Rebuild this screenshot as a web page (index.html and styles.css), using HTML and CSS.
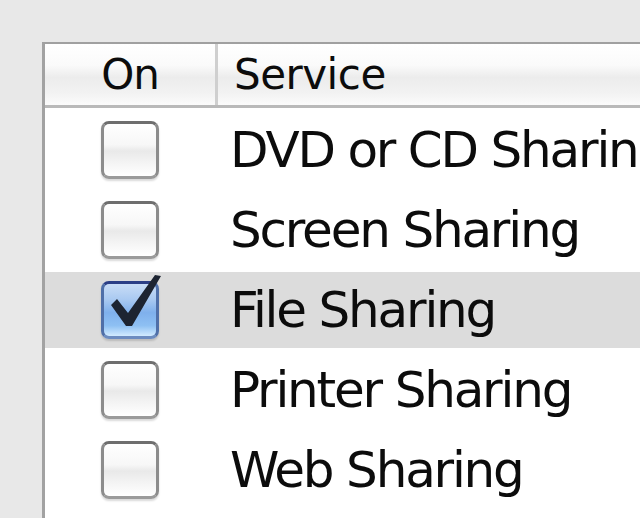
FILE: index.html
```html
<!DOCTYPE html>
<html lang="en">
<head>
  <meta charset="UTF-8" />
  <meta name="viewport" content="width=device-width, initial-scale=1.0"/>
  <title>Sharing Services</title>
  <link rel="stylesheet" href="styles.css">
</head>
<body>

  <div class="table">
    <!-- header -->
    <div class="table-head">
      <div class="col-on">On</div>
      <div class="col-service">Service</div>
    </div>

    <!-- rows -->
    <div class="table-body">
      <div class="row">
        <div class="cell-on"><span class="check"></span></div>
        <div class="cell-name">DVD or CD Sharing</div>
      </div>
      <div class="row">
        <div class="cell-on"><span class="check"></span></div>
        <div class="cell-name">Screen Sharing</div>
      </div>
      <div class="row selected">
        <div class="cell-on">
          <span class="check checked">
            <svg class="tick" width="58" height="58" viewBox="0 0 58 58">
              <path d="M10 24 L16 18 L27 32 L54 -6 L60 -5 L31 45 L25 45 Z" fill="#1d2431"/>
            </svg>
          </span>
        </div>
        <div class="cell-name">File Sharing</div>
      </div>
      <div class="row">
        <div class="cell-on"><span class="check"></span></div>
        <div class="cell-name">Printer Sharing</div>
      </div>
      <div class="row">
        <div class="cell-on"><span class="check"></span></div>
        <div class="cell-name">Web Sharing</div>
      </div>
    </div>
  </div>

</body>
</html>
```

FILE: styles.css
```css
html, body {
  margin: 0;
  height: 518px;
  overflow: hidden;
}
body {
  font-family: "DejaVu Sans", Verdana, sans-serif;
  background-color: #e8e8e8;
  color: #0c0c0c;
  padding: 42px 0 0 42px;
  box-sizing: border-box;
}
.table {
  width: 700px;
  height: 520px;
  background-color: #fff;
  border-left: 3px solid #a2a2a2;
  border-top: 2px solid #a0a0a0;
}
.table-head {
  display: flex;
  height: 61px;
  border-bottom: 3px solid #b9b9b9;
  background: linear-gradient(#ffffff 0%, #fafafa 35%, #ececec 55%, #f2f2f2 80%, #fbfbfb 100%);
}
.col-on {
  width: 170px;
  display: flex;
  align-items: center;
  justify-content: center;
  font-size: 42px;
  letter-spacing: -1px;
  border-right: 3px solid #cfcfcf;
}
.col-service {
  display: flex;
  align-items: center;
  padding-left: 16px;
  font-size: 42px;
  letter-spacing: -0.5px;
}
.table-body {
  display: flex;
  flex-direction: column;
  gap: 4px;
  padding-top: 4px;
}
.row {
  display: flex;
  height: 76px;
}
.row.selected {
  background-color: #dcdcdc;
}
.cell-on {
  width: 173px;
  display: flex;
  align-items: center;
  justify-content: center;
  padding-right: 3px;
  box-sizing: border-box;
}
.cell-name {
  display: flex;
  align-items: center;
  padding-left: 12px;
  font-size: 50px;
  letter-spacing: -2.2px;
  white-space: nowrap;
}
.check {
  position: relative;
  width: 52px;
  height: 52px;
  border: 3px solid #8c8c8c;
  border-top-color: #6e6e6e;
  border-bottom-color: #9a9a9a;
  border-radius: 8px;
  background: linear-gradient(#ffffff 0%, #f7f7f7 40%, #e9e9e9 52%, #f4f4f4 75%, #ffffff 100%);
  box-shadow: 0 2px 2px rgba(0, 0, 0, 0.15);
}
.check.checked {
  border-color: #4f6fa8;
  border-top-color: #2c3f86;
  border-bottom-color: #6c8cc0;
  background: linear-gradient(#c9ddf6 0%, #a9c9f1 30%, #7fb0ec 55%, #8ec0f3 80%, #d2ebff 100%);
}
.tick {
  position: absolute;
  left: -3px;
  top: -3px;
  overflow: visible;
}
```
